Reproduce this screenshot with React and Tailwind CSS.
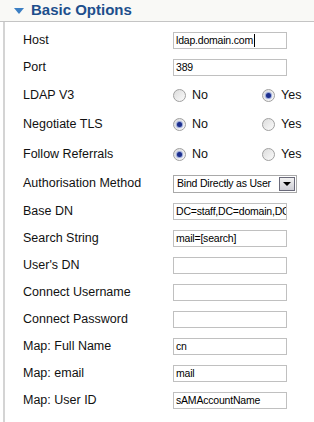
const ROWS = [
  { label: 'Host', type: 'text', value: 'ldap.domain.com', h: 'h-[27px]', caret: true },
  { label: 'Port', type: 'text', value: '389', h: 'h-[27px]' },
  { label: 'LDAP V3', type: 'radio', yes: true, h: 'h-[28px]' },
  { label: 'Negotiate TLS', type: 'radio', yes: false, h: 'h-[30px]' },
  { label: 'Follow Referrals', type: 'radio', yes: false, h: 'h-[30px]' },
  { label: 'Authorisation Method', type: 'select', value: 'Bind Directly as User', h: 'h-[29px]' },
  { label: 'Base DN', type: 'text', value: 'DC=staff,DC=domain,DC=com', h: 'h-[27px]' },
  { label: 'Search String', type: 'text', value: 'mail=[search]', h: 'h-[27px]' },
  { label: "User's DN", type: 'text', value: '', h: 'h-[27px]' },
  { label: 'Connect Username', type: 'text', value: '', h: 'h-[27px]' },
  { label: 'Connect Password', type: 'text', value: '', h: 'h-[27px]' },
  { label: 'Map: Full Name', type: 'text', value: 'cn', h: 'h-[27px]' },
  { label: 'Map: email', type: 'text', value: 'mail', h: 'h-[27px]' },
  { label: 'Map: User ID', type: 'text', value: 'sAMAccountName', h: 'h-[27px]' },
];

function Radio({ checked, label }) {
  return (
    <span className="flex items-center gap-[6px]">
      <span className="flex h-[13px] w-[13px] items-center justify-center rounded-full border border-[#a0a0a0] bg-gradient-to-br from-[#dcdcdc] to-[#fbfbfb]">
        {checked && <span className="h-[5px] w-[5px] rounded-full bg-[#1c2e8c] shadow-[0_0_1px_1px_#8fa0d8]" />}
      </span>
      <span className="text-[12.5px] text-[#111]">{label}</span>
    </span>
  );
}

function Field({ row }) {
  if (row.type === 'radio') {
    return (
      <div className="flex items-center">
        <div className="w-[89px]">
          <Radio checked={!row.yes} label="No" />
        </div>
        <Radio checked={row.yes} label="Yes" />
      </div>
    );
  }
  if (row.type === 'select') {
    return (
      <div className="flex h-[18px] w-[124px] items-center border border-[#a9a9a9] bg-white pl-[3px] pr-[1px]">
        <span className="flex-1 overflow-hidden whitespace-nowrap text-[10.5px] tracking-[-0.2px] text-black">{row.value}</span>
        <span className="flex h-[14px] w-[16px] items-center justify-center border border-[#6a6a7a] bg-gradient-to-b from-[#f2f2f2] to-[#cfcfd6]">
          <span className="h-0 w-0 border-x-[4px] border-t-[4px] border-x-transparent border-t-black" />
        </span>
      </div>
    );
  }
  return (
    <div className="flex h-[17px] w-[114px] items-center overflow-hidden whitespace-nowrap border border-[#c0c0c0] bg-white px-[2px] text-[10.5px] tracking-[-0.2px] text-black">
      {row.value}
      {row.caret && <span className="ml-[1px] h-[13px] w-px bg-black" />}
    </div>
  );
}

export default function App() {
  return (
    <div className="h-[422px] w-[314px] overflow-hidden bg-white font-['Liberation_Sans',Arial,sans-serif]">
      <div className="flex h-[22px] items-center border-b border-[#c4c4c4] bg-[#f9f9f6] pl-[14px]">
        <span className="mr-[7px] h-0 w-0 border-x-[5px] border-t-[6px] border-x-transparent border-t-[#3c7fc3]" />
        <span className="text-[15px] font-bold text-[#1d4f8c]">Basic Options</span>
      </div>
      <div className="ml-[3px] border-l-2 border-[#d4d4d4] pt-[5px] pb-4">
        {ROWS.map((row) => (
          <div key={row.label} className={`flex items-center pl-[18px] ${row.h}`}>
            <span className="w-[150px] text-[12.5px] text-[#111]">{row.label}</span>
            <Field row={row} />
          </div>
        ))}
      </div>
    </div>
  );
}
